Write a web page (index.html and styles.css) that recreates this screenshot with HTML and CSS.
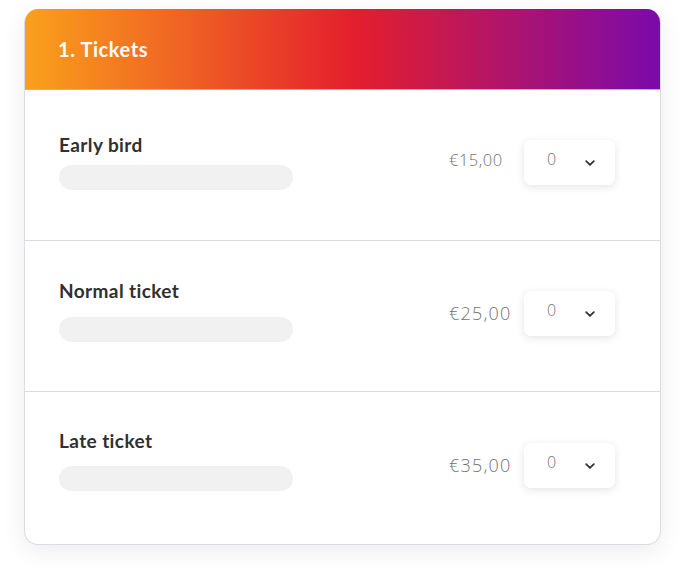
FILE: index.html
```html
<!DOCTYPE html>
<html lang="en">
<head>
<meta charset="utf-8">
<title>Tickets</title>
<link rel="stylesheet" href="styles.css">
</head>
<body>
<div class="page">
  <section class="card">
    <header class="card-header">
      <h2 class="card-title">1. Tickets</h2>
    </header>
    <div class="ticket">
      <div class="ticket-info">
        <div class="ticket-name">Early bird</div>
        <div class="ticket-desc"></div>
      </div>
      <div class="ticket-buy">
        <span class="price price-sm">€15,00</span>
        <div class="qty">
          <span class="qty-value">0</span>
          <svg class="chev" width="10" height="6" viewBox="0 0 10 6"><path d="M1.2 1.2 L5 4.8 L8.8 1.2" fill="none" stroke="#333" stroke-width="1.8" stroke-linecap="round" stroke-linejoin="round"/></svg>
        </div>
      </div>
    </div>
    <div class="ticket">
      <div class="ticket-info ticket-info-wide">
        <div class="ticket-name">Normal ticket</div>
        <div class="ticket-desc"></div>
      </div>
      <div class="ticket-buy">
        <span class="price">€25,00</span>
        <div class="qty">
          <span class="qty-value">0</span>
          <svg class="chev" width="10" height="6" viewBox="0 0 10 6"><path d="M1.2 1.2 L5 4.8 L8.8 1.2" fill="none" stroke="#333" stroke-width="1.8" stroke-linecap="round" stroke-linejoin="round"/></svg>
        </div>
      </div>
    </div>
    <div class="ticket ticket-last">
      <div class="ticket-info ticket-info-wide ticket-info-up">
        <div class="ticket-name">Late ticket</div>
        <div class="ticket-desc"></div>
      </div>
      <div class="ticket-buy">
        <span class="price">€35,00</span>
        <div class="qty">
          <span class="qty-value">0</span>
          <svg class="chev" width="10" height="6" viewBox="0 0 10 6"><path d="M1.2 1.2 L5 4.8 L8.8 1.2" fill="none" stroke="#333" stroke-width="1.8" stroke-linecap="round" stroke-linejoin="round"/></svg>
        </div>
      </div>
    </div>
  </section>
</div>
</body>
</html>
```

FILE: styles.css
```css
* { box-sizing: border-box; }
html, body { margin: 0; padding: 0; background: #ffffff; }
body { font-family: Lato, "Noto Sans", sans-serif; color: #333; }

.page {
  padding: 9px 22px 24px 24px;
}

.card {
  width: 637px;
  border: 1px solid #d9dce6;
  border-top: none;
  border-radius: 14px;
  overflow: hidden;
  background: #fff;
  box-shadow: 0 6px 24px rgba(0, 0, 0, 0.08);
}

.card-header {
  height: 81px;
  margin: 0 -1px;
  display: flex;
  align-items: center;
  padding: 0 34px;
  background: linear-gradient(90deg, #f9a11b 0%, #e41e2d 52%, #7a0aab 100%);
  border-bottom: 1px solid #f39a9e;
}

.card-title {
  margin: 0;
  padding-bottom: 1px;
  font-family: Lato, sans-serif;
  font-weight: 700;
  font-size: 20px;
  color: #fff;
  letter-spacing: 0.6px;
}

.ticket {
  height: 151px;
  display: flex;
  align-items: center;
  justify-content: space-between;
  padding: 0 45px 0 34px;
  border-bottom: 1px solid #d9dce6;
}
.ticket-last { height: 152px; border-bottom: none; }

.ticket-info {
  display: flex;
  flex-direction: column;
  gap: 9px;
  margin-top: -6px;
}
.ticket-info-wide {
  gap: 15px;
  margin-top: -10px;
}
.ticket-info-up {
  gap: 14px;
  margin-top: -16px;
}
.ticket-name {
  font-size: 19px;
  font-weight: 700;
  color: #303030;
  line-height: 22px;
  letter-spacing: 0.4px;
}
.ticket-desc {
  width: 234px;
  height: 25px;
  border-radius: 13px;
  background: #f1f1f1;
}

.ticket-buy {
  display: flex;
  align-items: center;
  margin-top: -6px;
}
.price {
  width: 75px;
  font-family: "Open Sans", sans-serif;
  font-weight: 300;
  font-size: 18px;
  color: #737373;
  letter-spacing: 1.2px;
}
.price-sm { font-size: 16.5px; letter-spacing: 0.5px; margin-top: -6px; }

.qty {
  width: 91px;
  height: 45px;
  display: flex;
  align-items: center;
  padding: 0 20px 0 23px;
  justify-content: space-between;
  background: #fff;
  border-radius: 7px;
  box-shadow: 0 2px 8px rgba(0, 0, 0, 0.11);
}
.qty-value {
  font-family: "Open Sans", sans-serif;
  font-weight: 300;
  font-size: 16px;
  color: #737373;
  margin-top: -6px;
}
.chev { display: block; margin-top: 2px; }
```
